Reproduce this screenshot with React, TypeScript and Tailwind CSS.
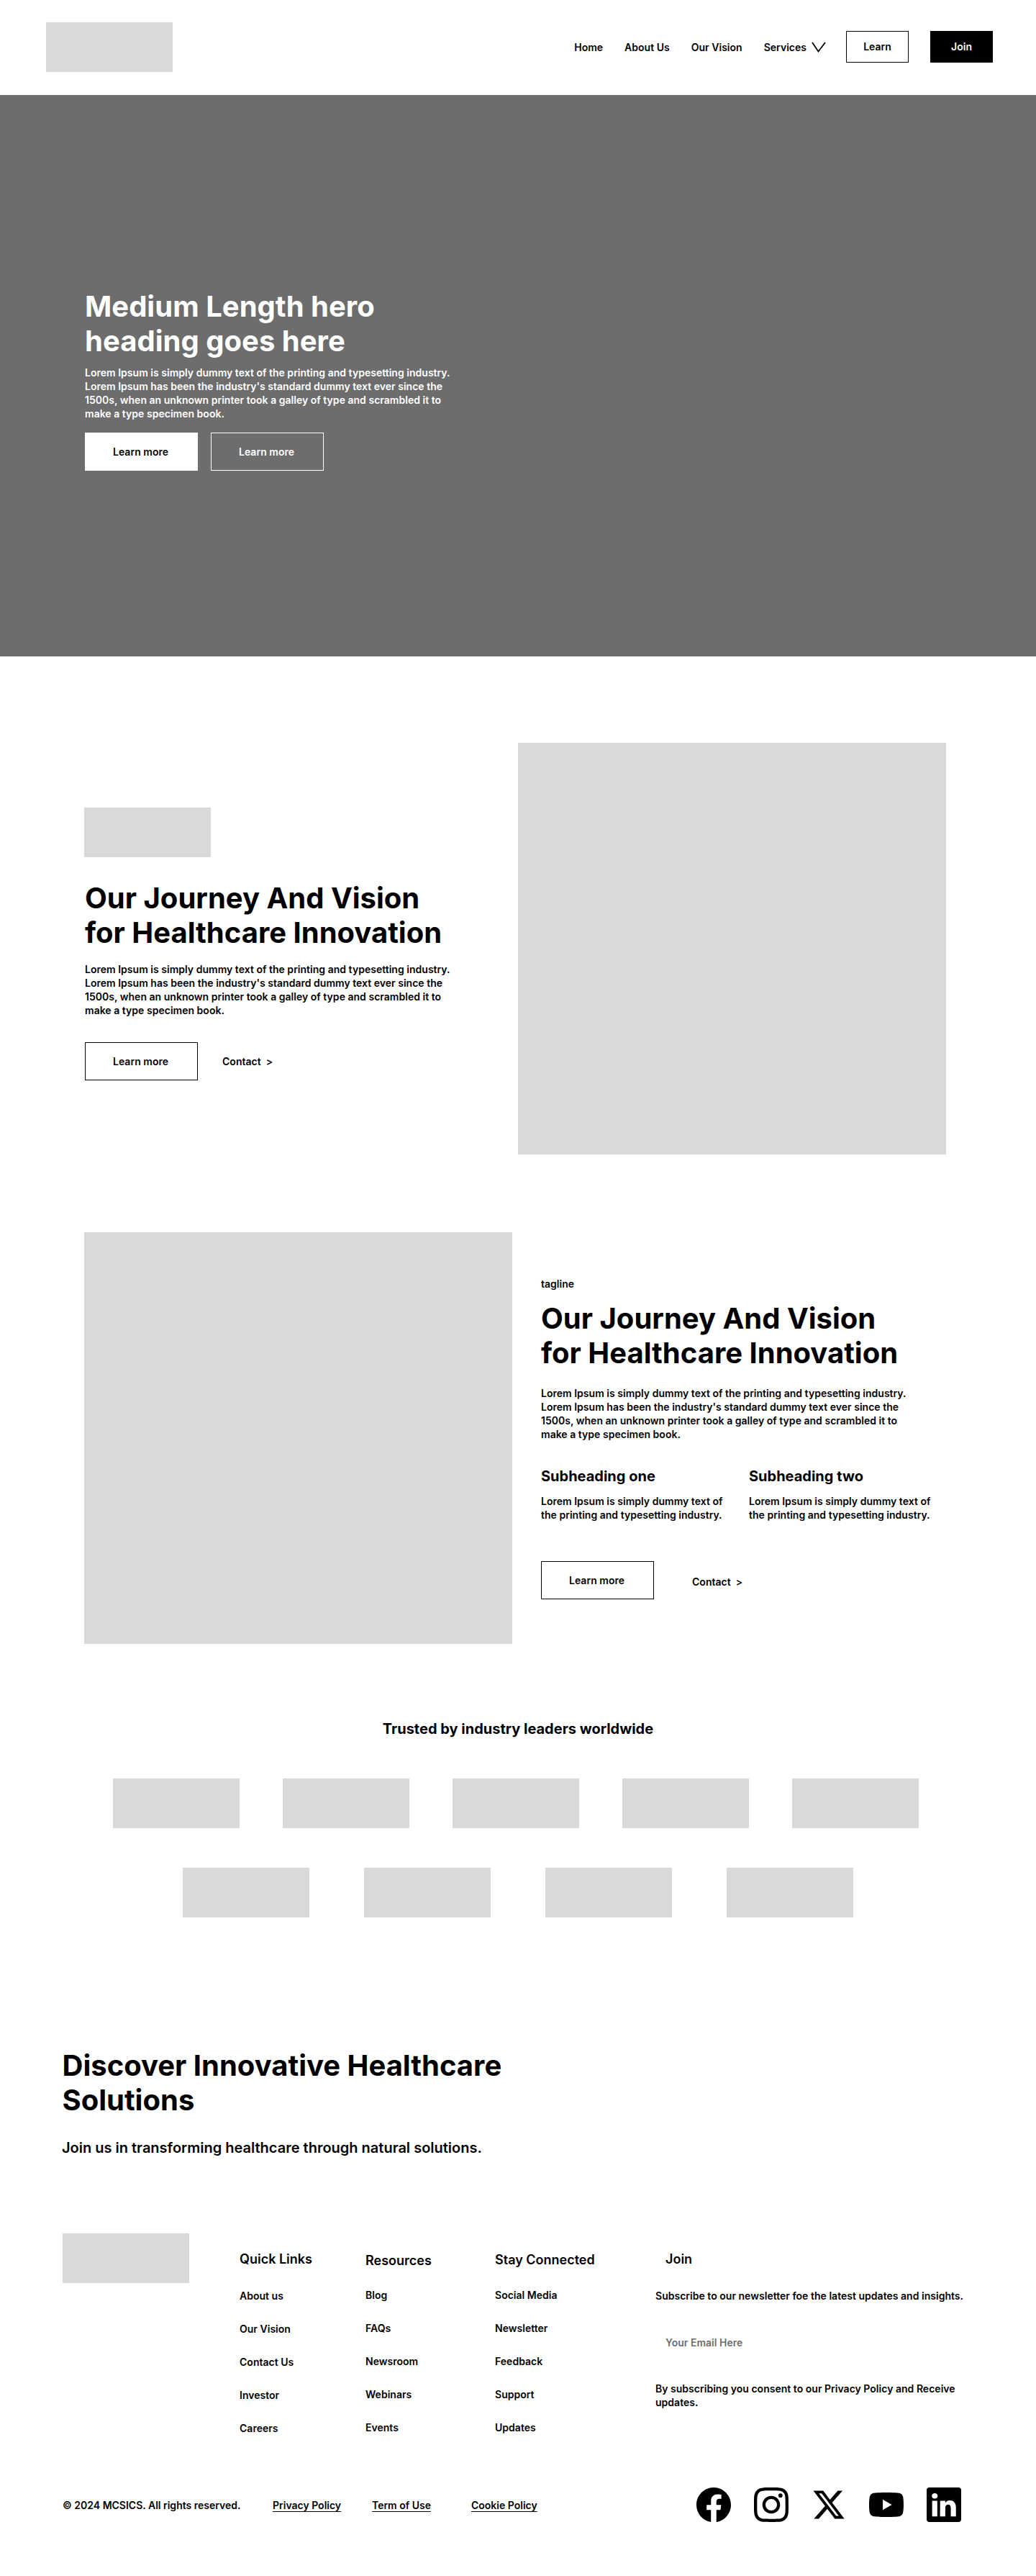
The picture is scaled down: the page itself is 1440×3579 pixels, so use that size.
import type { ReactNode } from "react";
import { BsFacebook, BsLinkedin } from "react-icons/bs";
import { SiInstagram, SiYoutube } from "react-icons/si";

const LOREM = [
  "Lorem Ipsum is simply dummy text of the printing and typesetting industry.",
  "Lorem Ipsum has been the industry's standard dummy text ever since the",
  "1500s, when an unknown printer took a galley of type and scrambled it to",
  "make a type specimen book.",
];

function Placeholder({ className = "" }: { className?: string }) {
  return <div className={`h-[69px] w-44 shrink-0 bg-[#d9d9d9] ${className}`} />;
}

function Lines({ lines }: { lines: string[] }) {
  return (
    <>
      {lines.map((line) => (
        <span key={line} className="block whitespace-nowrap">
          {line}
        </span>
      ))}
    </>
  );
}

function Button({ children, className = "" }: { children: ReactNode; className?: string }) {
  return (
    <button className={`flex h-[53px] w-[157px] items-center border pb-px pl-[38px] leading-[17px] ${className}`}>
      {children}
    </button>
  );
}

function Header() {
  return (
    <header className="flex h-[132px] items-start pt-[31px] pr-[60px] pl-16">
      <Placeholder />
      <div className="mt-3 ml-auto flex h-11 items-center">
        <nav className="flex gap-[30px] leading-[17px]">
          <a>Home</a>
          <a>About Us</a>
          <a>Our Vision</a>
          <a className="flex items-center gap-[7px]">
            Services
            <svg width="20" height="15" viewBox="0 0 20 15" fill="none" stroke="black" strokeWidth="1.8">
              <path d="M1 1L9.5 13.5L19 1" />
            </svg>
          </a>
        </nav>
        <button className="ml-7 h-11 w-[87px] border border-black pb-px">Learn</button>
        <button className="ml-[30px] h-11 w-[87px] bg-black pb-px text-white">Join</button>
      </div>
    </header>
  );
}

function Hero() {
  return (
    <section className="h-[780px] bg-[#6d6d6d] pt-[270px] pl-[118px] text-white">
      <h1 className="text-[40px] leading-[48px] font-bold">
        <Lines lines={["Medium Length hero", "heading goes here"]} />
      </h1>
      <p className="mt-[10px]">
        <Lines lines={LOREM} />
      </p>
      <div className="mt-[17px] flex gap-[18px]">
        <Button className="border-white bg-white text-black">Learn more</Button>
        <Button className="border-white">Learn more</Button>
      </div>
    </section>
  );
}

function JourneyTitle({ className = "" }: { className?: string }) {
  return (
    <h2 className={`text-[40px] leading-[48px] font-bold tracking-normal ${className}`}>
      <Lines lines={["Our Journey And Vision", "for Healthcare Innovation"]} />
    </h2>
  );
}

function Journey() {
  return (
    <section className="mt-[120px] flex pl-[117px]">
      <div className="w-[603px] pt-[90px]">
        <Placeholder />
        <div className="pl-px">
          <JourneyTitle className="mt-[33px]" />
          <p className="mt-[17px]">
            <Lines lines={LOREM} />
          </p>
          <div className="mt-[35px] flex items-center">
            <Button className="border-black">Learn more</Button>
            <a className="ml-[34px] pb-px leading-[17px] whitespace-pre">{"Contact  >"}</a>
          </div>
        </div>
      </div>
      <div className="h-[572px] w-[595px] bg-[#d9d9d9]" />
    </section>
  );
}

function Feature() {
  return (
    <section className="mt-[108px] flex pl-[117px]">
      <div className="h-[572px] w-[595px] bg-[#d9d9d9]" />
      <div className="pt-[63px] pl-10">
        <p className="leading-[17px]">tagline</p>
        <JourneyTitle className="mt-4" />
        <p className="mt-[22px]">
          <Lines lines={LOREM} />
        </p>
        <div className="mt-[37px] flex">
          {["Subheading one", "Subheading two"].map((title) => (
            <div key={title} className="w-[289px]">
              <h3 className="text-xl leading-6 font-bold tracking-normal">{title}</h3>
              <p className="mt-[13px]">
                <Lines lines={["Lorem Ipsum is simply dummy text of", "the printing and typesetting industry."]} />
              </p>
            </div>
          ))}
        </div>
        <div className="mt-[55px] flex">
          <Button className="border-black">Learn more</Button>
          <a className="mt-5 ml-[53px] leading-[17px] whitespace-pre">{"Contact  >"}</a>
        </div>
      </div>
    </section>
  );
}

function Trusted() {
  return (
    <section className="mt-[106px]">
      <h3 className="text-center text-xl leading-6 font-bold tracking-normal">Trusted by industry leaders worldwide</h3>
      <div className="mt-[57px] flex gap-[60px] pl-[157px]">
        {[1, 2, 3, 4, 5].map((n) => (
          <Placeholder key={n} />
        ))}
      </div>
      <div className="mt-[55px] flex justify-center gap-[76px]">
        {[1, 2, 3, 4].map((n) => (
          <Placeholder key={n} />
        ))}
      </div>
    </section>
  );
}

function LinkColumn({ title, links, className }: { title: string; links: string[]; className: string }) {
  return (
    <div className={className}>
      <h4 className="text-lg leading-[22px] tracking-normal">{title}</h4>
      <ul className="flex flex-col gap-[29px] leading-[17px]">
        {links.map((link) => (
          <li key={link}>{link}</li>
        ))}
      </ul>
    </div>
  );
}

function XLogo() {
  return (
    <svg width="48" height="48" viewBox="0 0 24 24" fill="currentColor">
      <path d="M18.244 2.25h3.308l-7.227 8.26 8.502 11.24H16.17l-5.214-6.817L4.99 21.75H1.68l7.73-8.835L1.254 2.25H8.08l4.713 6.231zm-1.161 17.52h1.833L7.084 4.126H5.117z" />
    </svg>
  );
}

function Footer() {
  return (
    <footer className="mt-[182px]">
      <h2 className="pl-[86.5px] text-[40px] leading-[48px] font-bold tracking-normal">
        <Lines lines={["Discover Innovative Healthcare", "Solutions"]} />
      </h2>
      <p className="mt-[30px] pl-[86px] text-xl leading-6 tracking-normal">
        Join us in transforming healthcare through natural solutions.
      </p>
      <div className="mt-[107px] flex h-[353px] pl-[87px]">
        <Placeholder />
        <LinkColumn
          title="Quick Links"
          links={["About us", "Our Vision", "Contact Us", "Investor", "Careers"]}
          className="ml-[70px] w-[175px] pt-[25px] [&>ul]:mt-[31px]"
        />
        <LinkColumn
          title="Resources"
          links={["Blog", "FAQs", "Newsroom", "Webinars", "Events"]}
          className="w-[180px] pt-[27px] [&>ul]:mt-[28px]"
        />
        <LinkColumn
          title="Stay Connected"
          links={["Social Media", "Newsletter", "Feedback", "Support", "Updates"]}
          className="w-[223px] pt-[26px] [&>ul]:mt-[29px]"
        />
        <div className="pt-[25px]">
          <h4 className="pl-[14px] text-lg leading-[22px] tracking-normal">Join</h4>
          <p className="mt-[31px] leading-[17px]">Subscribe to our newsletter foe the latest updates and insights.</p>
          <input
            placeholder="Your Email Here"
            className="mt-12 block h-[17px] pl-[14px] leading-[17px] outline-none placeholder:text-[#6d6d6d] placeholder:opacity-100"
          />
          <p className="mt-[46px]">
            <Lines lines={["By subscribing you consent to our Privacy Policy and Receive", "updates."]} />
          </p>
        </div>
      </div>
      <div className="flex h-12 items-center pl-[87px] leading-[17px] tracking-normal">
        <p className="w-[292px] pt-px">© 2024 MCSICS. All rights reserved.</p>
        <a className="w-[138px] pt-px underline decoration-1 underline-offset-[3px]">Privacy Policy</a>
        <a className="w-[138px] pt-px underline decoration-1 underline-offset-[3px]">Term of Use</a>
        <a className="w-[313px] pt-px underline decoration-1 underline-offset-[3px]">Cookie Policy</a>
        <div className="flex gap-8">
          <BsFacebook size={48} />
          <SiInstagram size={48} />
          <XLogo />
          <SiYoutube size={48} />
          <BsLinkedin size={48} />
        </div>
      </div>
    </footer>
  );
}

export default function App() {
  return (
    <div className="h-[3579px] w-[1440px] overflow-hidden bg-white font-['Inter',sans-serif] text-sm leading-[19px] font-semibold tracking-[0.02px] text-black">
      <Header />
      <Hero />
      <Journey />
      <Feature />
      <Trusted />
      <Footer />
    </div>
  );
}
